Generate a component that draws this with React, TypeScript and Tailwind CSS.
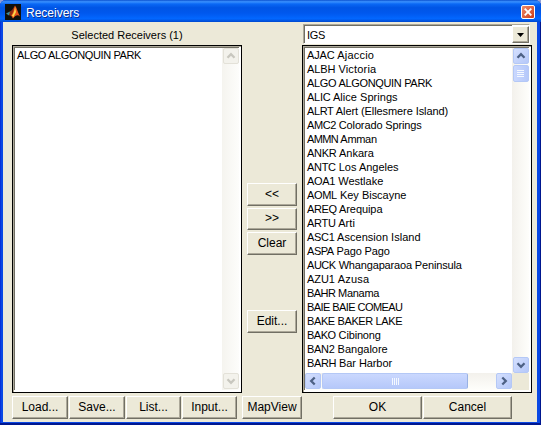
import React from "react";

// Station code, site name, and extra width in pixels spread over the letters of the row.
const receivers: [string, string, number][] = [
  ["AJAC", "Ajaccio", 3],
  ["ALBH", "Victoria", 3],
  ["ALGO ALGONQUIN PARK", "", 1],
  ["ALIC", "Alice Springs", 2],
  ["ALRT", "Alert (Ellesmere Island)", 0],
  ["AMC2", "Colorado Springs", -1],
  ["AMMN", "Amman", -2],
  ["ANKR", "Ankara", 1],
  ["ANTC", "Los Angeles", 1],
  ["AOA1", "Westlake", 1],
  ["AOML", "Key Biscayne", 1],
  ["AREQ", "Arequipa", 0],
  ["ARTU", "Arti", 1],
  ["ASC1", "Ascension Island", 2],
  ["ASPA", "Pago Pago", -1],
  ["AUCK", "Whangaparaoa Peninsula", -2],
  ["AZU1", "Azusa", 3],
  ["BAHR", "Manama", -2],
  ["BAIE BAIE COMEAU", "", -3],
  ["BAKE BAKER LAKE", "", 0],
  ["BAKO", "Cibinong", -1],
  ["BAN2", "Bangalore", 1],
  ["BARH", "Bar Harbor", 0],
];

function Row({ code, name, extra = 0 }: { code: string; name: string; extra?: number }) {
  const step = extra / (code.length + name.length);
  return (
    <div className="h-[14px] whitespace-pre text-[11px] leading-[14px]">
      <span style={{ letterSpacing: `${-0.38 + step}px` }}>{code}</span>
      {name && <span style={{ letterSpacing: `${-0.08 + step}px` }}>{" " + name}</span>}
    </div>
  );
}

function PushButton({ label, className }: { label: string; className: string }) {
  return (
    <button
      className={`flex shrink-0 items-center justify-center border border-t-white border-l-white border-r-[#716f64] border-b-[#716f64] bg-[#ece9d8] pb-[2px] text-[12px] leading-[14px] whitespace-nowrap shadow-[inset_-1px_-1px_0_#aca899] ${className}`}
    >
      {label}
    </button>
  );
}

const arrows = {
  up: "M4.5 9.7 L8 6.2 L11.5 9.7",
  down: "M4.5 6.3 L8 9.8 L11.5 6.3",
  left: "M9.7 4.5 L6.2 8 L9.7 11.5",
  right: "M6.3 4.5 L9.8 8 L6.3 11.5",
};

function ScrollButton({ dir, disabled }: { dir: keyof typeof arrows; disabled?: boolean }) {
  return (
    <div
      className={`h-4 w-4 shrink-0 rounded-[2px] border ${
        disabled ? "border-[#e3e1d8] bg-[#f3f2ec]" : "border-[#b4c8f6] bg-linear-to-br from-[#d5e0fe] to-[#b5c8f9]"
      }`}
    >
      <svg viewBox="1 1 14 14" className="block h-[14px] w-[14px]" fill="none">
        <path d={arrows[dir]} stroke={disabled ? "#c8c7bf" : "#4d6185"} strokeWidth="2.3" />
      </svg>
    </div>
  );
}

function MatlabIcon() {
  return (
    <svg viewBox="0 0 16 16" className="h-4 w-4 shrink-0">
      <rect width="16" height="16" fill="#10100c" />
      <path d="M1 9.5 L5 7.5 L6.5 9 L4 11.5 Z" fill="#3a8fa0" />
      <path d="M5 7.5 L7 6 L10 1.5 L9 8 L6 12 L4 11 Z" fill="#8f2b12" />
      <path d="M10 1.5 C12 4 13 9 15 12.5 C12.5 10.5 11 11 8 14.5 L6 11.5 C8.5 9 9 4 10 1.5 Z" fill="#e8541b" />
      <path d="M10 2.5 L11 8 L8.5 13 L7 11.5 C9 9 9.6 6 10 2.5 Z" fill="#ffd94a" />
    </svg>
  );
}

export default function App() {
  return (
    <div className="h-[425px] w-[541px] overflow-hidden bg-[#8f9fd8] font-['Liberation_Sans',Arial,sans-serif] text-black">
      <div className="flex h-full flex-col overflow-hidden rounded-t-[6px] bg-[#0a48e4] shadow-[inset_-1px_-2px_0_#00178f,inset_1px_0_0_#0831d9]">
        <header className="flex h-[22px] shrink-0 items-center bg-[linear-gradient(180deg,#0b51cf_0%,#3a91ff_8%,#0a68f5_18%,#0055e5_35%,#0058ee_60%,#0267ff_85%,#0048cf_100%)] pt-[2px] pr-[6px] pl-[5px]">
          <MatlabIcon />
          <span className="ml-[5px] grow pt-[2px] text-[12px] leading-[14px] text-white [text-shadow:1px_1px_0_#0d2f8c]">Receivers</span>
          <div className="flex h-[14px] w-[14px] items-center justify-center rounded-[2px] border border-white bg-linear-to-br from-[#ee8a68] to-[#cc3810]">
            <svg viewBox="0 0 10 10" className="h-[10px] w-[10px]" fill="none">
              <path d="M1.7 1.7 L8.3 8.3 M8.3 1.7 L1.7 8.3" stroke="white" strokeWidth="1.9" />
            </svg>
          </div>
        </header>

        <main className="mr-[4px] mb-[3px] ml-[3px] flex grow flex-col bg-[#ece9d8] pl-[9px]">
          <div className="flex h-[371px]">
            <section className="w-[230px]">
              <div className="flex h-[23px] items-center justify-center pt-[3px] text-[11px]">Selected Receivers (1)</div>
              <div className="flex h-[348px] border border-black bg-white">
                <div className="flex w-full border-t border-l border-[#aca899] pr-[2px] pb-[2px]">
                  <div className="grow border-t border-l border-[#716f64] pl-[2px]">
                    <Row code="ALGO ALGONQUIN PARK" name="" />
                  </div>
                  <div className="flex w-[17px] flex-col items-center justify-between border-t border-t-[#716f64] bg-linear-to-r from-[#f5f4ef] to-[#fdfdfb] pb-px">
                    <ScrollButton dir="up" disabled />
                    <ScrollButton dir="down" disabled />
                  </div>
                </div>
              </div>
            </section>

            <section className="flex w-[60px] flex-col gap-[2px] pt-[161px] pl-[5px]">
              <PushButton label="<<" className="h-[23px] w-[50px]" />
              <PushButton label=">>" className="h-[22px] w-[50px]" />
              <PushButton label="Clear" className="h-[23px] w-[50px]" />
              <PushButton label="Edit..." className="mt-[53px] h-[23px] w-[50px]" />
            </section>

            <section className="w-[230px]">
              <div className="h-[23px] pt-[2px] pl-px">
                <div className="flex h-[20px] w-[227px] border border-t-[#aca899] border-r-white border-b-white border-l-[#aca899] bg-white">
                  <div className="flex grow items-center border-t border-l border-[#716f64] pt-px pl-[2px] text-[11px] tracking-[-0.3px]">IGS</div>
                  <div className="mt-px flex w-[17px] items-center justify-center border border-t-white border-r-[#716f64] border-b-[#716f64] border-l-white bg-[#ece9d8] shadow-[inset_-1px_-1px_0_#aca899]">
                    <svg viewBox="0 0 7 4" className="h-1 w-[7px]"><path d="M0 0H7L3.5 4Z" /></svg>
                  </div>
                </div>
              </div>
              <div className="flex h-[348px] border border-black bg-white">
                <div className="w-full border-t border-l border-[#aca899] pr-[2px] pb-[2px]">
                  <div className="flex h-full flex-col border-t border-l border-[#716f64]">
                    <div className="flex h-[325px]">
                      <div className="grow pl-[2px]">
                        {receivers.map(([code, name, extra]) => (
                          <Row key={code} code={code} name={name} extra={extra} />
                        ))}
                      </div>
                      <div className="flex w-[17px] flex-col items-center bg-linear-to-r from-[#f3f1ec] to-[#fefefb]">
                        <ScrollButton dir="up" />
                        <div className="mt-px flex h-[17px] w-4 flex-col items-center justify-center gap-px rounded-[2px] border border-[#b4c8f6] bg-linear-to-r from-[#cad8fe] to-[#b5c8fa]">
                          {[0, 1, 2, 3].map((n) => (
                            <div key={n} className="h-px w-[7px] bg-[#f4f8ff]" />
                          ))}
                        </div>
                        <div className="grow" />
                        <ScrollButton dir="down" />
                      </div>
                    </div>
                    <div className="flex grow">
                      <div className="flex grow items-start bg-linear-to-b from-[#f3f1ec] to-[#fefefb]">
                        <ScrollButton dir="left" />
                        <div className="ml-px flex h-4 w-[146px] items-center justify-center gap-px rounded-[2px] border border-[#b4c8f6] border-r-[#98b1e4] bg-linear-to-b from-[#cad8fe] to-[#b5c8fa]">
                          {[0, 1, 2, 3].map((n) => (
                            <div key={n} className="h-[7px] w-px bg-[#f4f8ff]" />
                          ))}
                        </div>
                        <div className="grow" />
                        <ScrollButton dir="right" />
                      </div>
                      <div className="w-[17px] bg-[#ece9d8]" />
                    </div>
                  </div>
                </div>
              </div>
            </section>
          </div>

          <footer className="flex pt-[3px]">
            <PushButton label="Load..." className="h-[23px] w-[56px]" />
            <PushButton label="Save..." className="ml-px h-[23px] w-[56px]" />
            <PushButton label="List..." className="ml-px h-[23px] w-[55px]" />
            <PushButton label="Input..." className="ml-px h-[23px] w-[55px]" />
            <PushButton label="MapView" className="ml-[5px] h-[23px] w-[60px]" />
            <PushButton label="OK" className="ml-[31px] h-[23px] w-[89px]" />
            <PushButton label="Cancel" className="ml-px h-[23px] w-[89px]" />
          </footer>
        </main>
      </div>
    </div>
  );
}
